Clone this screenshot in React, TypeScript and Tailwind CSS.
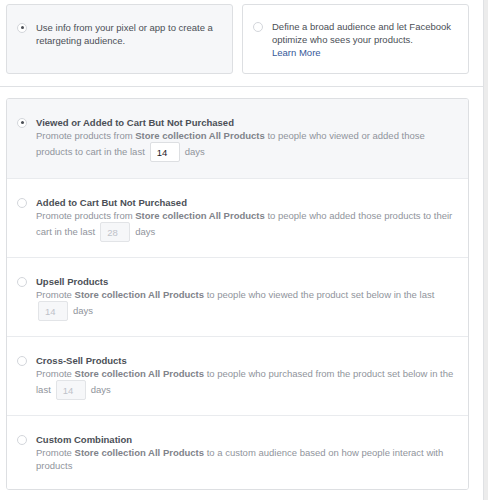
import React from "react";

const font = { fontFamily: '"Liberation Sans", Arial, sans-serif' };

function Radio({ checked }: { checked?: boolean }) {
  return (
    <div className="mt-[1.5px] flex h-[10px] w-[10px] shrink-0 items-center justify-center rounded-full border border-[#d3d6db] bg-white">
      {checked && <div className="h-[3px] w-[3px] rounded-full bg-[#4b4f56]" />}
    </div>
  );
}

function DayBox({ value, active, first }: { value: string; active?: boolean; first?: boolean }) {
  return (
    <span
      className={
        (first ? "ml-[2px] " : "ml-[5px] ") +
        "mr-[5px] inline-flex h-[20px] w-[30px] items-center rounded-[2px] border px-[6px] align-middle " +
        (active
          ? "border-[#dddfe2] bg-white text-[#1d2129]"
          : "border-[#e2e4e7] bg-[#f6f7f9] text-[#bec2c9]")
      }
    >
      {value}
    </span>
  );
}

const B = ({ children }: { children: React.ReactNode }) => (
  <span className="font-bold text-[#7f838a]">{children}</span>
);

function Item({
  title,
  checked,
  children,
  pb,
  last,
}: {
  title: string;
  checked?: boolean;
  children: React.ReactNode;
  pb: string;
  last?: boolean;
}) {
  return (
    <div
      className={
        "flex gap-[9px] pl-[10px] pr-[10px] pt-[17px] " +
        pb +
        (last ? " " : " border-b border-[#e9ebee] ") +
        (checked ? "bg-[#f6f7f9]" : "bg-white")
      }
    >
      <Radio checked={checked} />
      <div className="flex-1 whitespace-nowrap">
        <div className="text-[9.5px] font-bold leading-[13px] text-[#4b4f56]">{title}</div>
        <div className="text-[9.5px] leading-[13px] text-[#90949c]">{children}</div>
      </div>
    </div>
  );
}

export default function App() {
  return (
    <div className="flex h-[500px] w-[493px] bg-white" style={font}>
      <div className="w-[484px] border-r border-[#dfe1e4]">
        <div className="flex gap-[9px] border-b border-[#dfe1e4] pb-[12px] pl-[6px] pr-[14px] pt-[4px]">
          <div className="flex h-[70px] w-[227px] gap-[9px] rounded-[3px] border border-[#dddfe2] bg-[#f6f7f9] pl-[10px] pr-[8px] pt-[16px]">
            <Radio checked />
            <div className="text-[9.5px] leading-[13px] text-[#4b4f56]">
              Use info from your pixel or app to create a<br />retargeting audience.
            </div>
          </div>
          <div className="flex h-[70px] w-[227px] gap-[9px] rounded-[3px] border border-[#dddfe2] bg-white pl-[10px] pr-[8px] pt-[15px]">
            <Radio />
            <div className="text-[9.5px] leading-[13px] text-[#4b4f56]">
              Define a broad audience and let Facebook
              <br />
              optimize who sees your products.
              <div className="text-[#365899]">Learn More</div>
            </div>
          </div>
        </div>
        <div className="ml-[6px] mt-[11px] w-[463px] overflow-hidden rounded-[3px] border border-[#dddfe2]">
          <Item title="Viewed or Added to Cart But Not Purchased" checked pb="pb-[16px]">
            Promote products from <B>Store collection All Products</B> to people who viewed or added those
            <br />
            products to cart in the last
            <DayBox value="14" active />
            days
          </Item>
          <Item title="Added to Cart But Not Purchased" pb="pb-[15px]">
            Promote products from <B>Store collection All Products</B> to people who added those products to their
            <br />
            cart in the last
            <DayBox value="28" />
            days
          </Item>
          <Item title="Upsell Products" pb="pb-[15px]">
            Promote <B>Store collection All Products</B> to people who viewed the product set below in the last
            <br />
            <DayBox value="14" first />
            days
          </Item>
          <Item title="Cross-Sell Products" pb="pb-[15px]">
            Promote <B>Store collection All Products</B> to people who purchased from the product set below in the
            <br />
            last
            <DayBox value="14" />
            days
          </Item>
          <Item title="Custom Combination" pb="pb-[17px]" last>
            Promote <B>Store collection All Products</B> to a custom audience based on how people interact with
            <br />
            products
          </Item>
        </div>
      </div>
      <div className="w-[4px] bg-[#ececec]" />
    </div>
  );
}
